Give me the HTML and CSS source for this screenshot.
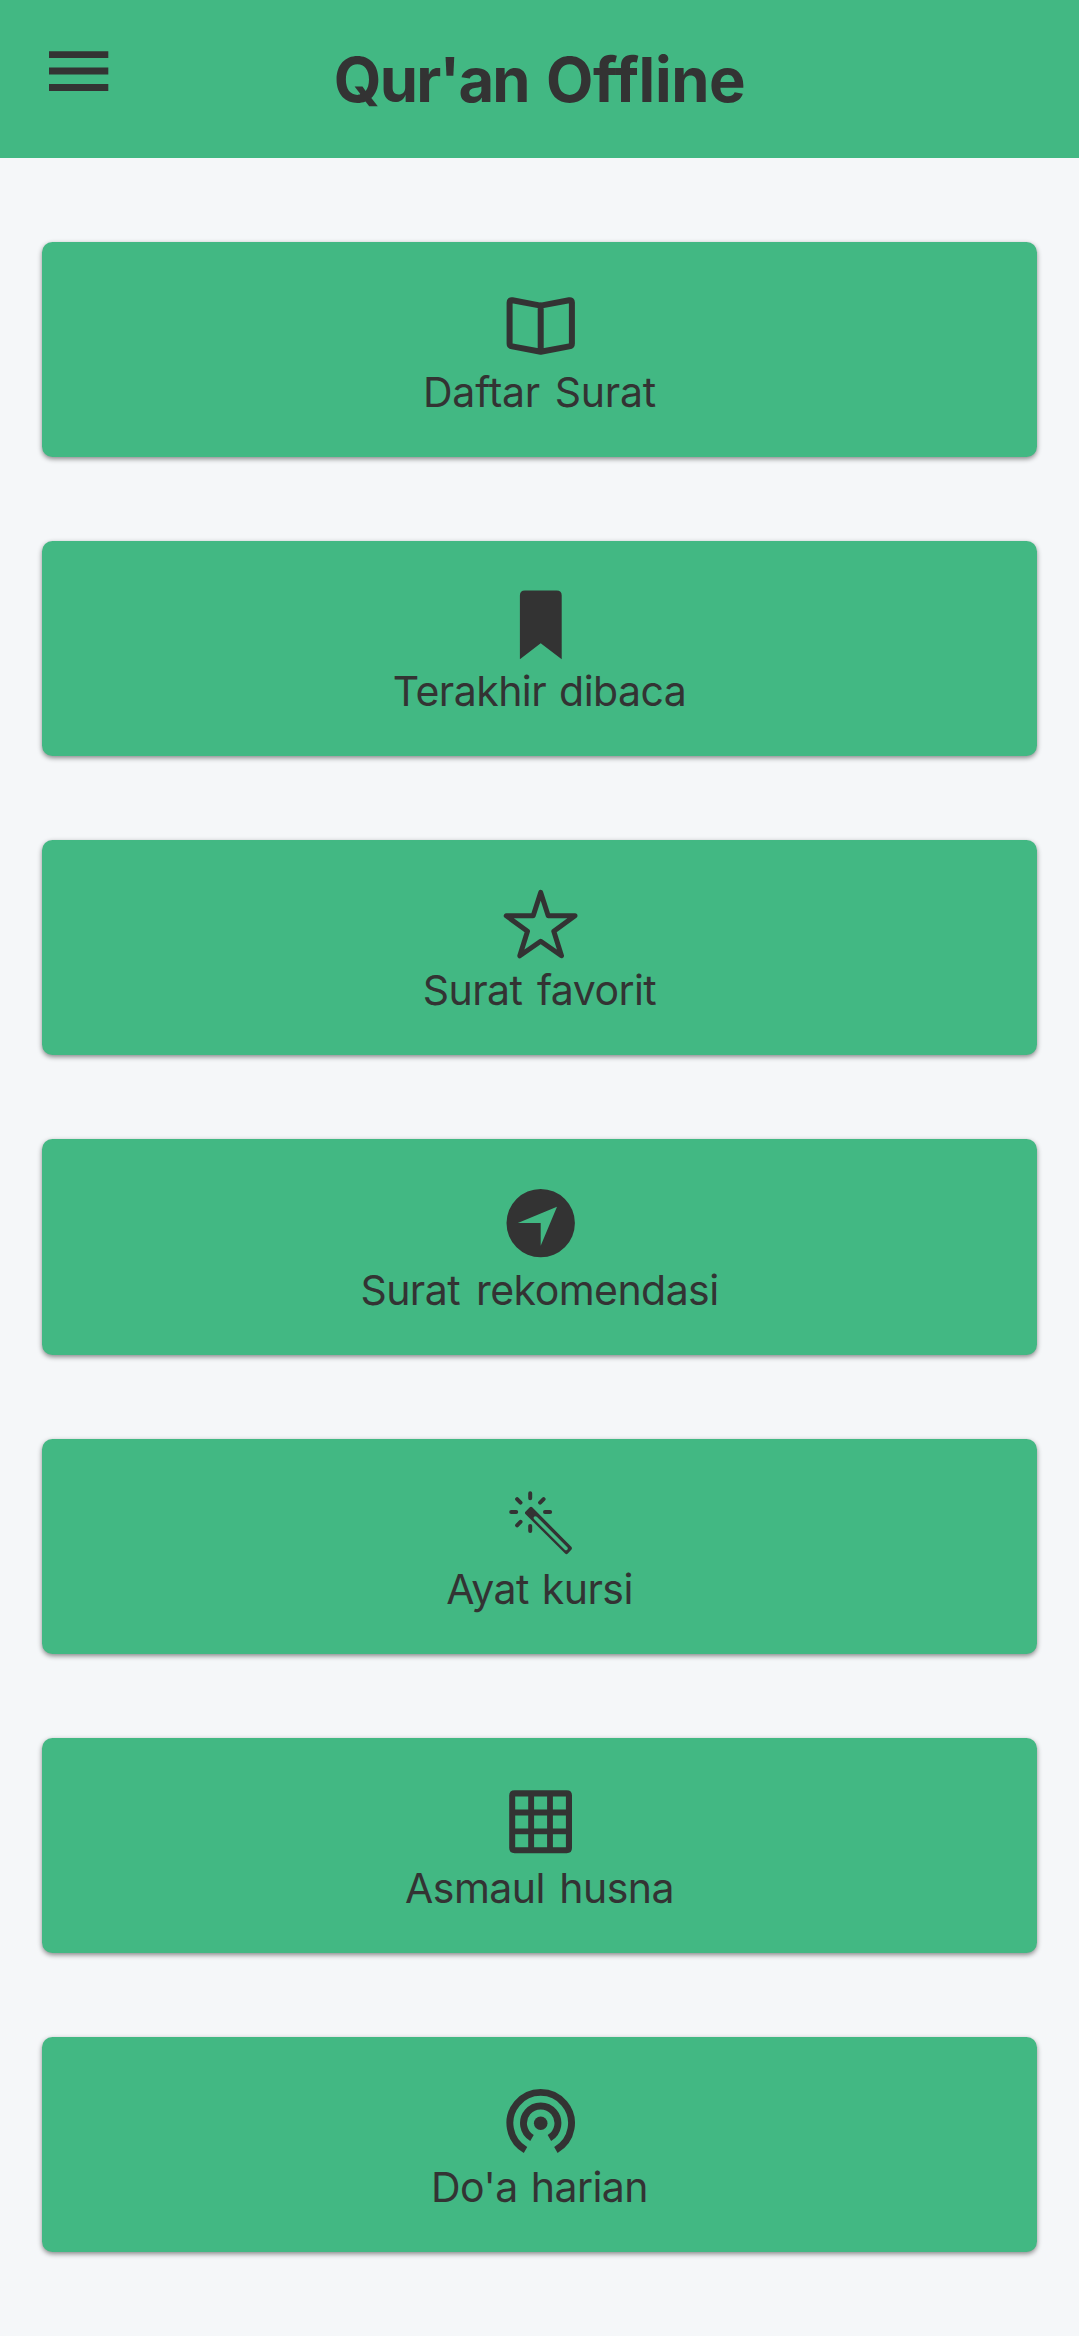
FILE: index.html
```
<!DOCTYPE html>
<html lang="id">
<head>
<meta charset="utf-8">
<title>Qur'an Offline</title>
<link rel="stylesheet" href="styles.css">
</head>
<body>
<header class="header">
  <button class="menu" aria-label="Menu">
    <svg width="60" height="41" viewBox="0 0 60 41"><path d="M0 .2h59.3v6.7H0zM0 16.5h59.3v7H0zM0 33.1h59.3v7H0z" fill="currentColor"/></svg>
  </button>
  <h1 class="title"><span class="title-tight">Qur'an</span> Offline</h1>
</header>
<main class="list">
  <a class="card">
    <svg class="icon" viewBox="0.6 0 80 80"><path class="stroke" stroke-width="6" d="M41.3 19.6 13 14.3Q10.2 13.9 10.2 16.6V57.4Q10.2 59.9 12.8 60.4L41.3 65.8 69.8 60.4Q72.5 59.9 72.5 57.4V16.6Q72.5 13.9 69.7 14.3ZV65.8"/></svg>
    <span class="label label-daftar">Daftar Surat</span>
  </a>
  <a class="card">
    <svg class="icon" viewBox="0.6 0 80 80"><path class="fill" d="M25.5 5.6H57.3Q62.3 5.6 62.3 10.6V74.3L41.3 58.2 20.5 74.3V10.6Q20.5 5.6 25.5 5.6Z"/></svg>
    <span class="label label-terakhir">Terakhir dibaca</span>
  </a>
  <a class="card">
    <svg class="icon" viewBox="0.6 0 80 80"><path class="stroke" stroke-width="5" d="M41.3 8.4 48.8 31.8H75.6L54.4 47.3 62.1 71.8 41.3 57.2 20.4 71.8 28.1 47.3 6.9 31.8H33.8Z"/></svg>
    <span class="label label-favorit">Surat favorit</span>
  </a>
  <a class="card">
    <svg class="icon" viewBox="0.6 0 80 80"><path class="fill" fill-rule="evenodd" d="M41.3 5.9a34.2 34.2 0 1 1 0 68.4a34.2 34.2 0 1 1 0-68.4ZM57.6 23.7 18.4 40.1H41.3V62.8Z"/></svg>
    <span class="label label-rekomendasi">Surat rekomendasi</span>
  </a>
  <a class="card">
    <svg class="icon" viewBox="0.6 0.3 80 80">
      <path class="stroke" stroke-width="4" d="M30.8 10.6V15.6M30.8 43.2V48.4M11.8 29.2H16.8M45.6 29.2H50.7M17.7 16.4 21.1 19.9M44.2 16.4 40.7 19.9M17.7 42.6 21.1 39.1"/>
      <path class="fill" fill-rule="evenodd" d="M30.4 24.5Q31.6 23.4 32.8 24.5L71.9 64.1Q73.2 65.6 71.9 67L68.4 70.9Q67 72 65.7 70.9L26 31.4Q25 30.2 26 29ZM37.4 34Q35.6 32.9 34.6 34.1 33.8 35.3 34.8 36.6L65.3 67.1Q66.6 68.2 67.8 67 69 65.8 67.9 64.5Z"/>
    </svg>
    <span class="label label-ayat">Ayat kursi</span>
  </a>
  <a class="card">
    <svg class="icon" viewBox="0.6 0 80 80"><path class="fill" fill-rule="evenodd" d="M15.3 8.25H67.3Q72.6 8.25 72.6 13.5V66Q72.6 71.2 67.3 71.2H15.3Q9.8 71.2 9.8 66V13.5Q9.8 8.25 15.3 8.25ZM15.8 14.5v13h13v-13ZM34.7 14.5v13h13v-13ZM53.5 14.5v13h13v-13ZM15.8 33.5v13h13v-13ZM34.7 33.5v13h13v-13ZM53.5 33.5v13h13v-13ZM15.8 52.3v13h13v-13ZM34.7 52.3v13h13v-13ZM53.5 52.3v13h13v-13Z"/></svg>
    <span class="label label-asmaul">Asmaul husna</span>
  </a>
  <a class="card">
    <svg class="icon" viewBox="0.6 0 80 80">
      <path class="arc" d="M26.1 69A30.8 30.8 0 1 1 56.5 69M32.6 57A17.2 17.2 0 1 1 50 57"/>
      <circle class="fill" cx="41.3" cy="42.2" r="6.8"/>
    </svg>
    <span class="label label-doa">Do'a harian</span>
  </a>
</main>
</body>
</html>
```
FILE: styles.css
```
* {
  box-sizing: border-box;
}

body {
  margin: 0;
  min-height: 2336px;
  background: #f5f7f9;
  color: #333;
  font-family: Inter, "Liberation Sans", sans-serif;
}

.header {
  display: grid;
  grid-template-columns: 110px 1fr 110px;
  height: 158px;
  background: #42b883;
}

.menu {
  margin: 0;
  padding: 51px 0 0 49px;
  border: 0;
  background: none;
  color: inherit;
  display: flex;
  align-items: flex-start;
}

.menu svg {
  flex: none;
}

.title {
  margin: 0;
  padding-top: 43px;
  font-size: 61.5px;
  font-weight: 700;
  line-height: 74px;
  letter-spacing: -0.4px;
  word-spacing: 3px;
  text-align: center;
  white-space: nowrap;
}

.title-tight {
  letter-spacing: -1.8px;
}

.list {
  display: flex;
  flex-direction: column;
  gap: 84px;
  padding: 83.5px 42px 0;
}

.card {
  display: flex;
  flex-direction: column;
  align-items: center;
  height: 215.25px;
  padding-top: 44px;
  border-radius: 10.5px;
  background: #42b883;
  box-shadow: 0 2px 5px rgba(0, 0, 0, 0.45);
}

.icon {
  flex: none;
  width: 80px;
  height: 80px;
}

.fill {
  fill: #333;
}

.stroke {
  fill: none;
  stroke: #333;
  stroke-linecap: round;
  stroke-linejoin: round;
}

.arc {
  fill: none;
  stroke: #333;
  stroke-width: 6.9;
}

.label {
  margin-top: 1.25px;
  font-size: 41px;
  line-height: 50px;
  letter-spacing: -0.55px;
  word-spacing: 3.5px;
  white-space: nowrap;
}

.label-daftar {
  letter-spacing: -0.25px;
  word-spacing: 3.5px;
}

.label-terakhir,
.label-ayat,
.label-doa {
  word-spacing: 2px;
}

.label-rekomendasi {
  word-spacing: 5px;
}
```
